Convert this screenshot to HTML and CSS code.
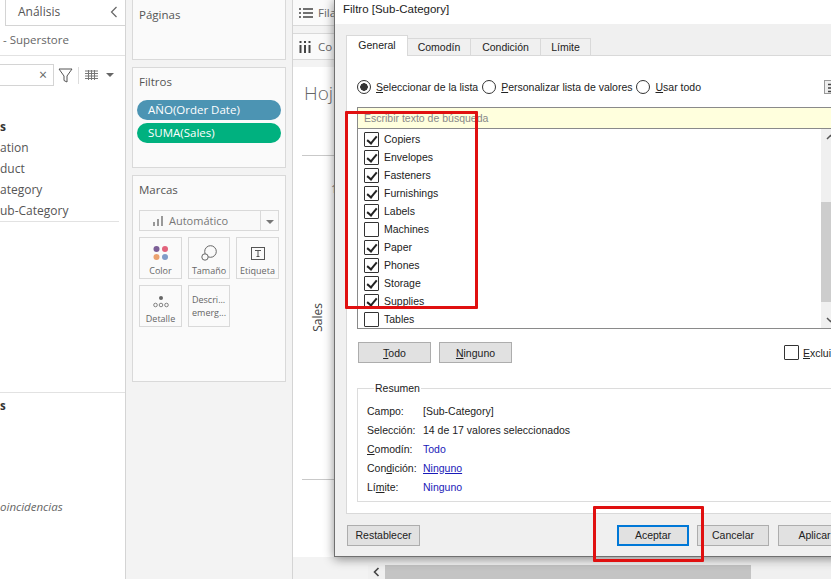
FILE: index.html
```html
<!DOCTYPE html>
<html>
<head>
    <title>Filtro [Sub-Category]</title>
    <link rel="stylesheet" href="styles.css">
</head>
<body>
    <div class="app">
        <!-- Data pane, cut off by the window edge -->
        <aside class="data-pane">
            <div class="pane-tab">
                <span class="pane-tab-label">Análisis</span>
                <svg class="pane-chevron" width="8" height="12" viewBox="0 0 8 12"><path d="M6.5 1 1.500 6l5 5" fill="none" stroke="#666" stroke-width="1.2"/></svg>
            </div>
            <div class="source-row">- Superstore</div>
            <div class="search-row">
                <div class="search-box">×</div>
                <svg class="filter-icon" width="15" height="15" viewBox="0 0 15 15"><path d="M1 1h13L9 8v6l-3-1.500V8z" fill="none" stroke="#555"/></svg>
                <span class="search-divider"></span>
                <svg width="13" height="10" viewBox="0 0 13 10"><path d="M0 1h13M0 3.500h13M0 6h13M0 8.500h13M3.500 0v10M6.500 0v10M9.500 0v10" stroke="#777" fill="none"/></svg>
                <span class="caret"></span>
            </div>
            <ul class="field-list">
                <li class="field-head">s</li>
                <li>ation</li>
                <li>duct</li>
                <li>ategory</li>
                <li>ub-Category</li>
            </ul>
            <div class="measures">
                <div class="field-head">s</div>
                <div class="no-match">oincidencias</div>
            </div>
        </aside>

        <!-- Pages, filters and marks cards -->
        <section class="shelf-pane">
            <div class="card card-pages"><h3>Páginas</h3></div>
            <div class="card card-filters">
                <h3>Filtros</h3>
                <div class="pill pill-blue">AÑO(Order Date)</div>
                <div class="pill pill-green">SUMA(Sales)</div>
            </div>
            <div class="card card-marks">
                <h3>Marcas</h3>
                <div class="mark-select">
                    <span class="mark-select-label">
                        <svg width="11" height="10" viewBox="0 0 11 10"><path d="M1 10V6h2v4zM5 10V3h2v7zM9 10V0h2v10z" fill="#999"/></svg>
                        Automático
                    </span>
                    <span class="mark-select-arrow"><span class="caret"></span></span>
                </div>
                <div class="mark-grid">
                    <div class="mark-btn">
                        <svg width="16" height="16" viewBox="0 0 16 16"><circle cx="3.500" cy="4" r="3" fill="#7c5f97"/><circle cx="12" cy="4" r="3" fill="#e2637c"/><circle cx="3.500" cy="12" r="3" fill="#eba26f"/><circle cx="12" cy="12" r="3" fill="#7f9cc9"/></svg>
                        <span>Color</span>
                    </div>
                    <div class="mark-btn">
                        <svg width="16" height="16" viewBox="0 0 16 16"><circle cx="9.500" cy="6.500" r="5.800" fill="none" stroke="#666"/><circle cx="4" cy="12" r="3.200" fill="#fafafa" stroke="#666"/></svg>
                        <span>Tamaño</span>
                    </div>
                    <div class="mark-btn">
                        <svg width="14" height="14" viewBox="0 0 14 14"><rect x=".5" y=".5" width="13" height="12" fill="none" stroke="#555"/><path d="M4 3.500h6M7 3.500v6M5.500 9.500h3" stroke="#555" fill="none"/></svg>
                        <span>Etiqueta</span>
                    </div>
                    <div class="mark-btn">
                        <svg width="16" height="16" viewBox="0 0 16 16"><circle cx="8" cy="5" r="2" fill="#666"/><circle cx="2.500" cy="12" r="1.800" fill="none" stroke="#666" stroke-width=".8"/><circle cx="8" cy="12" r="1.800" fill="none" stroke="#666" stroke-width=".8"/><circle cx="13.500" cy="12" r="1.800" fill="none" stroke="#666" stroke-width=".8"/></svg>
                        <span>Detalle</span>
                    </div>
                    <div class="mark-btn mark-btn-text">Descri...<br>emerg...</div>
                </div>
            </div>
        </section>

        <!-- Worksheet area behind the dialog -->
        <main class="sheet-pane">
            <div class="shelf">
                <svg width="14" height="10" viewBox="0 0 14 10"><path d="M0 1h2M4 1h10M0 5h2M4 5h10M0 9h2M4 9h10" stroke="#444" stroke-width="1.500"/></svg>
                <span>Fila</span>
            </div>
            <div class="shelf">
                <svg width="12" height="12" viewBox="0 0 12 12"><path d="M1.500 0v2M6 0v2M10.500 0v2M1.500 4v8M6 4v8M10.500 4v8" stroke="#444" stroke-width="2"/></svg>
                <span class="shelf-col">Co</span>
            </div>
            <div class="canvas">
                <div class="sheet-title">Hoj</div>
                <div class="chart">
                    <span class="axis-title">Sales</span>
                    <span class="axis-tick">1</span>
                </div>
            </div>
            <div class="hscroll">
                <span class="hscroll-arrow">
                    <svg width="7" height="10" viewBox="0 0 7 10"><path d="M5.500 1 1.500 5l4 4" fill="none" stroke="#444" stroke-width="1.600"/></svg>
                </span>
                <span class="hscroll-thumb"></span>
            </div>
        </main>

        <!-- Filter dialog -->
        <div class="dialog">
            <div class="dialog-title">Filtro [Sub-Category]</div>
            <div class="dialog-body">
                <div class="tabs">
                    <span class="tab tab-active">General</span>
                    <span class="tab tab-wildcard">Comodín</span>
                    <span class="tab tab-condition">Condición</span>
                    <span class="tab tab-limit">Límite</span>
                </div>
                <div class="tab-panel">
                    <div class="radio-row">
                        <span class="radio radio-on"></span><span class="radio-text"><u>S</u>eleccionar de la lista</span>
                        <span class="radio"></span><span class="radio-text"><u>P</u>ersonalizar lista de valores</span>
                        <span class="radio"></span><span class="radio-text"><u>U</u>sar todo</span>
                        <span class="list-toggle">
                            <svg width="10" height="12" viewBox="0 0 10 12"><path d="M1 2.500h9M1 6h9M1 9.500h9" stroke="#444" stroke-width="1.500"/></svg>
                        </span>
                    </div>
                    <div class="value-list">
                        <div class="value-search">Escribir texto de búsqueda</div>
                        <div class="value-scroll">
                            <div class="value-rows">
                                <div class="value-row"><span class="check check-on"></span>Copiers</div>
                                <div class="value-row"><span class="check check-on"></span>Envelopes</div>
                                <div class="value-row"><span class="check check-on"></span>Fasteners</div>
                                <div class="value-row"><span class="check check-on"></span>Furnishings</div>
                                <div class="value-row"><span class="check check-on"></span>Labels</div>
                                <div class="value-row"><span class="check"></span>Machines</div>
                                <div class="value-row"><span class="check check-on"></span>Paper</div>
                                <div class="value-row"><span class="check check-on"></span>Phones</div>
                                <div class="value-row"><span class="check check-on"></span>Storage</div>
                                <div class="value-row"><span class="check check-on"></span>Supplies</div>
                                <div class="value-row"><span class="check"></span>Tables</div>
                            </div>
                            <div class="vscroll">
                                <svg width="9" height="6" viewBox="0 0 9 6"><path d="M1 5l3.500-3.500L8 5" fill="none" stroke="#555" stroke-width="1.500"/></svg>
                                <span class="vscroll-thumb"></span>
                                <svg width="9" height="6" viewBox="0 0 9 6"><path d="M1 1l3.500 3.500L8 1" fill="none" stroke="#555" stroke-width="1.500"/></svg>
                            </div>
                        </div>
                    </div>
                    <div class="list-actions">
                        <button class="win-btn"><u>T</u>odo</button>
                        <button class="win-btn"><u>N</u>inguno</button>
                        <span class="exclude"><span class="check"></span><span><u>E</u>xcluir</span></span>
                    </div>
                    <fieldset class="summary">
                        <legend>Resumen</legend>
                        <div class="summary-row"><span class="summary-key">Campo:</span><span>[Sub-Category]</span></div>
                        <div class="summary-row"><span class="summary-key">Selección:</span><span>14 de 17 valores seleccionados</span></div>
                        <div class="summary-row"><span class="summary-key"><u>C</u>omodín:</span><span class="link">Todo</span></div>
                        <div class="summary-row"><span class="summary-key">Con<u>d</u>ición:</span><span class="link link-under">Ninguno</span></div>
                        <div class="summary-row"><span class="summary-key">Lí<u>m</u>ite:</span><span class="link">Ninguno</span></div>
                    </fieldset>
                </div>
                <div class="dialog-actions">
                    <button class="win-btn">Restablecer</button>
                    <span class="actions-space"></span>
                    <button class="win-btn win-btn-default">Aceptar</button>
                    <button class="win-btn win-btn-cancel">Cancelar</button>
                    <button class="win-btn">Aplicar</button>
                </div>
            </div>
        </div>

        <!-- Red annotation boxes drawn over the screenshot -->
        <div class="mark-box mark-box-list"></div>
        <div class="mark-box mark-box-ok"></div>
    </div>
</body>
</html>
```

FILE: styles.css
```css
/* Reset default margin and padding */
* {
    margin: 0;
    padding: 0;
    box-sizing: border-box;
}

body {
    background-color: #fff;
    font-family: "Open Sans", "Noto Sans", sans-serif;
    color: #555;
}

.app {
    position: relative;
    display: flex;
    width: 831px;
    height: 579px;
    overflow: hidden;
}

/* Data pane */
.data-pane {
    width: 126px;
    flex: none;
    background-color: #fff;
    border-right: 1px solid #d4d4d4;
}

.pane-tab {
    display: flex;
    align-items: center;
    justify-content: space-between;
    height: 26px;
    margin-left: 5px;
    padding: 0 7px 2px 12px;
    border-left: 1px solid #d4d4d4;
    border-bottom: 1px solid #d4d4d4;
    font-size: 12px;
}

.source-row {
    height: 30px;
    padding: 6px 0 0 3px;
    border-bottom: 1px solid #e2e2e2;
    font-size: 11.500px;
    color: #666;
    line-height: 16px;
}

.search-row {
    display: flex;
    align-items: center;
    height: 22px;
    margin-top: 8px;
}

.search-box {
    width: 54px;
    height: 22px;
    padding-right: 6px;
    border: 1px solid #d4d4d4;
    border-left: none;
    text-align: right;
    font-size: 14px;
    line-height: 19px;
    color: #666;
}

.filter-icon {
    margin-left: 4px;
}

.search-divider {
    width: 1px;
    height: 17px;
    margin: 0 6px 0 5px;
    background-color: #ddd;
}

.caret {
    display: inline-block;
    width: 0;
    height: 0;
    margin-left: 8px;
    border-left: 4px solid transparent;
    border-right: 4px solid transparent;
    border-top: 4px solid #666;
}

.field-list {
    list-style: none;
    height: 106px;
    margin: 30px 6px 0 0;
    border-bottom: 1px solid #e2e2e2;
    font-size: 12px;
    line-height: 21px;
}

.field-head {
    font-weight: 700;
    color: #333;
}

.measures {
    margin-top: 170px;
    padding-top: 2px;
    border-top: 1px solid #e2e2e2;
    font-size: 11.500px;
    line-height: 21px;
}

.no-match {
    margin-top: 80px;
    font-style: italic;
    color: #666;
}

/* Cards column */
.shelf-pane {
    display: flex;
    flex-direction: column;
    gap: 7px;
    width: 167px;
    flex: none;
    padding: 0 6px;
    background-color: #f3f3f3;
    border-right: 1px solid #d4d4d4;
}

.card {
    background-color: #fafafa;
    border: 1px solid #d9d9d9;
    padding: 6px 6px;
}

.card h3 {
    font-size: 11.500px;
    font-weight: 400;
    line-height: 16px;
    color: #555;
}

.card-pages {
    height: 61px;
    margin-top: -1px;
    padding-top: 7px;
}

.card-filters {
    height: 101px;
    padding: 6px 4px;
}

.card-filters h3 {
    margin-left: 2px;
}

.pill {
    height: 20px;
    margin-bottom: 3px;
    padding-left: 11px;
    border-radius: 10px;
    font-size: 11.500px;
    line-height: 19px;
    color: #fff;
}

.card-filters h3 + .pill {
    margin-top: 10px;
}

.pill-blue {
    background-color: #4c94b3;
}

.pill-green {
    background-color: #00b17f;
}

.card-marks {
    height: 207px;
}

.mark-select {
    display: flex;
    height: 21px;
    margin-top: 12px;
    border: 1px solid #d9d9d9;
    background-color: #f9f9f9;
    font-size: 11px;
}

.mark-select-label {
    flex: 1;
    display: flex;
    align-items: center;
    gap: 6px;
    padding-left: 12px;
    color: #777;
}

.mark-select-arrow {
    width: 18px;
    border-left: 1px solid #d9d9d9;
    line-height: 17px;
}

.mark-select-arrow .caret {
    margin-left: 5px;
    border-top-color: #777;
}

.mark-grid {
    display: grid;
    grid-template-columns: 43px 42px 43px;
    grid-auto-rows: 42px;
    gap: 6px;
    margin-top: 6px;
    width: 140px;
}

.mark-btn {
    display: flex;
    flex-direction: column;
    align-items: center;
    justify-content: flex-end;
    gap: 3px;
    padding-bottom: 1px;
    border: 1px solid #d9d9d9;
    font-size: 9px;
    line-height: 13px;
    color: #666;
}

.mark-btn-text {
    display: block;
    padding: 7px 0 0 3px;
    line-height: 13px;
}

/* Worksheet */
.sheet-pane {
    display: flex;
    flex-direction: column;
    flex: 1;
    min-width: 0;
    background-color: #f3f3f3;
}

.shelf {
    display: flex;
    align-items: center;
    gap: 5px;
    height: 27px;
    margin-bottom: 7px;
    padding-left: 6px;
    background-color: #fafafa;
    border: 1px solid #d9d9d9;
    border-left: none;
    font-size: 11.500px;
    color: #666;
}

.shelf:first-child {
    margin-top: -1px;
}

.shelf-col {
    margin-left: 2px;
}

.canvas {
    flex: none;
    height: 490px;
    padding: 13px 0 0 9px;
    background-color: #fff;
}

.sheet-title {
    height: 75px;
    margin-left: 2px;
    font-size: 19px;
    font-weight: 300;
    line-height: 26px;
    color: #666;
}

.chart {
    display: flex;
    height: 325px;
    border-top: 1px solid #c9c9c9;
    border-bottom: 1px solid #c9c9c9;
}

.axis-title {
    align-self: center;
    margin-left: 7px;
    writing-mode: vertical-rl;
    transform: rotate(180deg);
    font-size: 12px;
    color: #444;
}

.axis-tick {
    margin: 25px 0 0 5px;
    font-size: 11px;
    color: #777;
}

.hscroll {
    display: flex;
    height: 14px;
    margin: 8px 0 0 75px;
    background-color: #f0f0f0;
}

.hscroll-arrow {
    display: flex;
    align-items: center;
    justify-content: center;
    width: 17px;
    height: 14px;
}

.hscroll-thumb {
    width: 366px;
    background-color: #c4c4c4;
}

/* Filter dialog */
.dialog {
    position: absolute;
    left: 334px;
    top: -1px;
    width: 530px;
    height: 558px;
    display: flex;
    flex-direction: column;
    background-color: #fff;
    border-left: 1px solid #707070;
    border-bottom: 1px solid #707070;
    box-shadow: 0 2px 10px rgba(0, 0, 0, 0.45);
    font-family: "Liberation Sans", Arial, sans-serif;
    font-size: 10.500px;
    color: #222;
}

.dialog-title {
    height: 25px;
    padding: 2px 0 0 8px;
    font-size: 11.500px;
    line-height: 16px;
}

.dialog-body {
    flex: 1;
    display: flex;
    flex-direction: column;
    padding: 11px 0 0 11px;
    background-color: #f0f0f0;
}

.tabs {
    display: flex;
    align-items: flex-end;
    height: 21px;
    margin-bottom: -1px;
}

.tab {
    height: 18px;
    border: 1px solid #d9d9d9;
    border-left: none;
    background-color: #f0f0f0;
    text-align: center;
    line-height: 17px;
}

.tab-wildcard {
    width: 63px;
}

.tab-condition {
    width: 70px;
}

.tab-limit {
    width: 50px;
}

.tab-active {
    width: 62px;
    height: 21px;
    border-left: 1px solid #d9d9d9;
    border-bottom: none;
    background-color: #fff;
    position: relative;
    z-index: 1;
    line-height: 18px;
}

.tab-panel {
    height: 459px;
    padding: 0 10px;
    background-color: #fff;
    border: 1px solid #d9d9d9;
}

.radio-row {
    display: flex;
    align-items: center;
    height: 14px;
    margin-top: 24px;
}

.radio {
    width: 14px;
    height: 14px;
    flex: none;
    border: 1px solid #333;
    border-radius: 50%;
}

.radio-on {
    background: radial-gradient(circle, #333 0 3.500px, #fff 4px);
}

.radio-text {
    margin: 0 4px 0 5px;
}

.list-toggle {
    position: absolute;
    left: 489px;
    top: 81px;
    width: 14px;
    height: 14px;
    padding: 1px 0 0 2px;
    background-color: #eee;
    border: 1px solid #999;
}

.value-list {
    width: 483px;
    height: 222px;
    margin-top: 13px;
    border: 1px solid #8a8a8a;
}

.value-search {
    height: 21px;
    padding-left: 6px;
    background-color: #ffffdd;
    border-bottom: 1px solid #8a8a8a;
    line-height: 20px;
    color: #888;
}

.value-scroll {
    display: flex;
    height: 199px;
}

.value-rows {
    flex: 1;
    padding: 1px 0 0 6px;
    overflow: hidden;
}

.value-row {
    display: flex;
    align-items: center;
    gap: 5px;
    height: 18px;
}

.check {
    position: relative;
    display: inline-block;
    width: 15px;
    height: 15px;
    flex: none;
    background-color: #fff;
    border: 1px solid #333;
    border-radius: 1px;
}

.check-on::after {
    content: "";
    position: absolute;
    left: 4px;
    top: 1px;
    width: 4px;
    height: 8px;
    border-right: 2px solid #222;
    border-bottom: 2px solid #222;
    transform: rotate(40deg);
}

.vscroll {
    display: flex;
    flex-direction: column;
    align-items: center;
    width: 18px;
    background-color: #f0f0f0;
}

.vscroll svg {
    flex: none;
    margin: 5px 0;
}

.vscroll-thumb {
    width: 100%;
    height: 105px;
    margin: 57px 0 10px;
    background-color: #cdcdcd;
}

.list-actions {
    display: flex;
    align-items: center;
    gap: 8px;
    margin-top: 13px;
    padding-left: 1px;
}

.win-btn {
    width: 73px;
    height: 21px;
    border: 1px solid #adadad;
    background-color: #e1e1e1;
    font-family: "Liberation Sans", Arial, sans-serif;
    font-size: 10.500px;
    color: #222;
}

.win-btn-default {
    width: 72px;
    border: 2px solid #0078d7;
}

.win-btn-cancel {
    width: 72px;
    margin-right: 1px;
}

.exclude {
    display: flex;
    align-items: center;
    gap: 4px;
    margin-left: 264px;
}

.summary {
    width: 520px;
    height: 120px;
    margin-top: 19px;
    padding: 6px 0 0 9px;
    border: 1px solid #dcdcdc;
}

.summary legend {
    margin-left: 7px;
    padding: 0 1px;
    line-height: 13px;
}

.summary-row {
    display: flex;
    height: 19px;
    align-items: center;
}

.summary-key {
    width: 56px;
    flex: none;
}

.link {
    color: #1a1ab8;
}

.link-under {
    text-decoration: underline;
}

.dialog-actions {
    display: flex;
    align-items: center;
    gap: 8px;
    height: 42px;
    padding: 0 0 0 1px;
}

.actions-space {
    width: 181px;
}

/* Red annotation boxes */
.mark-box {
    position: absolute;
    border: 3px solid #e01010;
    border-radius: 1px;
}

.mark-box-list {
    left: 345px;
    top: 111px;
    width: 133px;
    height: 198px;
}

.mark-box-ok {
    left: 593px;
    top: 506px;
    width: 111px;
    height: 56px;
}
```
